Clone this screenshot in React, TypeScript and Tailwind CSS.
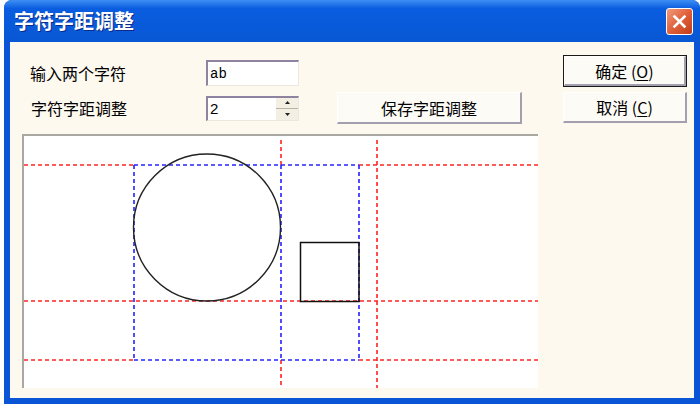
import React from "react";

const font = { fontFamily: '"Noto Sans CJK SC", "Noto Sans", sans-serif' };

const Button = ({
  children,
  main,
  className,
}: {
  children: React.ReactNode;
  main?: boolean;
  className?: string;
}) => (
  <div
    className={`${className} ${main ? "border border-[#1a1a1a]" : ""} flex`}
  >
    <div className="flex-1 flex items-center justify-center bg-[#fdfbf6] border-t border-l border-t-white border-l-white border-r-2 border-b-2 border-r-[#a39fae] border-b-[#a39fae] text-[16px] leading-none text-black">
      {children}
    </div>
  </div>
);

const Canvas = () => {
  const red = "#ff2424";
  const blue = "#2424ff";
  const dash = "4 3";
  return (
    <div className="mt-[10px] w-[516px] h-[254px] bg-white border-t-2 border-l-2 border-[#aaa8a2]">
      <svg width="514" height="252" viewBox="24 136 514 252">
        <g strokeWidth="1.6" strokeDasharray={dash} fill="none">
          <line x1="24" y1="165" x2="134" y2="165" stroke={red} />
          <line x1="359" y1="165" x2="538" y2="165" stroke={red} />
          <line x1="24" y1="301" x2="538" y2="301" stroke={red} />
          <line x1="24" y1="360" x2="134" y2="360" stroke={red} />
          <line x1="359" y1="360" x2="538" y2="360" stroke={red} />
          <line x1="281" y1="140" x2="281" y2="165" stroke={red} />
          <line x1="281" y1="360" x2="281" y2="388" stroke={red} />
          <line x1="377" y1="140" x2="377" y2="388" stroke={red} />
          <line x1="134" y1="165" x2="359" y2="165" stroke={blue} />
          <line x1="134" y1="360" x2="359" y2="360" stroke={blue} />
          <line x1="134" y1="165" x2="134" y2="360" stroke={blue} />
          <line x1="281" y1="165" x2="281" y2="360" stroke={blue} />
          <line x1="359" y1="165" x2="359" y2="360" stroke={blue} />
        </g>
        <circle cx="207" cy="227.5" r="73.5" fill="none" stroke="#222" strokeWidth="1.4" />
        <rect x="300.5" y="242.5" width="58.5" height="59" fill="none" stroke="#111" strokeWidth="1.5" />
      </svg>
    </div>
  );
};

export default function App() {
  return (
    <div className="w-[700px] h-[404px] bg-white overflow-hidden pl-[4px]" style={font}>
      <div className="w-[696px] h-[404px] flex flex-col rounded-t-[8px] bg-[#0a54d6]">
        <div className="h-[42px] flex items-center pl-[10px] pr-[7px] rounded-t-[8px] bg-gradient-to-b from-[#3d8ff4] via-[#0a5de0] via-[20%] to-[#0857d4]">
          <span className="text-white font-bold text-[20px] leading-none [text-shadow:1px_1px_0_#0b2a8a]">
            字符字距调整
          </span>
          <div className="ml-auto w-[27px] h-[27px] rounded-[3px] border border-white bg-gradient-to-br from-[#f09a7c] via-[#e0603a] to-[#c23b17] flex items-center justify-center">
            <svg width="15" height="15" viewBox="0 0 15 15">
              <path d="M2.5 2.5 L12.5 12.5 M12.5 2.5 L2.5 12.5" stroke="white" strokeWidth="2.6" strokeLinecap="square" />
            </svg>
          </div>
        </div>
        <div className="mx-[6px] mb-[6px] flex-1 bg-[#fef9ef] flex pl-[12px] pt-[13px]">
          <div className="w-[516px] flex flex-col pt-[5px]">
            <div className="h-[26px] flex items-center">
              <span className="w-[184px] pl-[8px] text-[16px] leading-none text-black">输入两个字符</span>
              <div className="w-[93px] h-[26px] bg-white border-t-2 border-l-2 border-[#8e84a2] border-r border-b border-r-[#ece8dc] border-b-[#ece8dc] flex items-center pl-[2px]">
                <span className="text-[14px] leading-none text-black" style={{ fontFamily: '"Liberation Mono", monospace' }}>ab</span>
              </div>
            </div>
            <div className="mt-[6px] h-[32px] flex items-center">
              <span className="w-[184px] pl-[9px] text-[16px] leading-none text-black">字符字距调整</span>
              <div className="w-[93px] h-[25px] bg-white border-t-2 border-l-2 border-[#8e84a2] border-r border-b border-r-[#ece8dc] border-b-[#ece8dc] flex items-center">
                <span className="pl-[2px] text-[15px] leading-none text-black flex-1" style={{ fontFamily: '"Liberation Sans", sans-serif' }}>2</span>
                <div className="w-[22px] h-full flex flex-col bg-[#f3efe3]">
                  <div className="flex-1 flex items-center justify-center border-b border-[#b8b4a8]">
                    <svg width="5" height="3" viewBox="0 0 5 3"><path d="M2.5 0 L5 3 L0 3 Z" fill="#222" /></svg>
                  </div>
                  <div className="flex-1 flex items-center justify-center">
                    <svg width="5" height="3" viewBox="0 0 5 3"><path d="M0 0 L5 0 L2.5 3 Z" fill="#222" /></svg>
                  </div>
                </div>
              </div>
              <Button className="ml-[38px] w-[185px] h-[32px]">保存字距调整</Button>
            </div>
            <Canvas />
          </div>
          <div className="ml-[25px] w-[124px] flex flex-col">
            <Button main className="h-[32px]">
              确定 (<span className="underline underline-offset-2">O</span>)
            </Button>
            <Button className="mt-[5px] h-[31px]">
              取消 (<span className="underline underline-offset-2">C</span>)
            </Button>
          </div>
        </div>
      </div>
    </div>
  );
}
